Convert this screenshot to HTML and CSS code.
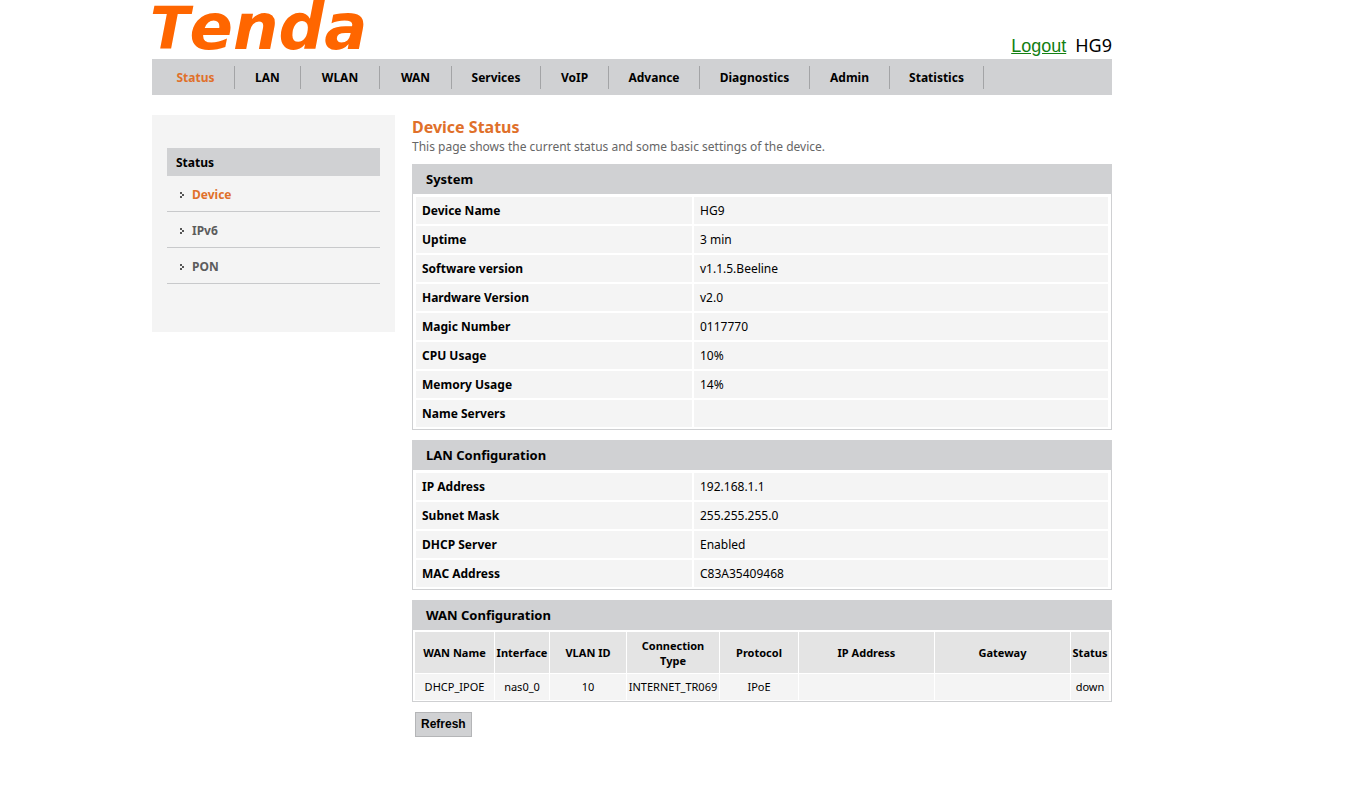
FILE: index.html
```html
<!DOCTYPE html>
<html lang="en">
<head>
<meta charset="utf-8">
<title>Tenda HG9 - Device Status</title>
<link rel="stylesheet" href="styles.css">
</head>
<body>
<div class="page">
  <header class="header">
    <svg class="logo" viewBox="0 0 232 56" role="img" aria-label="Tenda"><text class="logo-text" x="-2" y="49"><tspan class="logo-cap">T</tspan>enda</text></svg>
    <div class="account"><a class="logout" href="#">Logout</a><span class="model">HG9</span></div>
  </header>
  <nav class="nav">
    <a class="nav-item active" href="#">Status</a>
    <a class="nav-item" href="#">LAN</a>
    <a class="nav-item" href="#">WLAN</a>
    <a class="nav-item" href="#">WAN</a>
    <a class="nav-item" href="#">Services</a>
    <a class="nav-item" href="#">VoIP</a>
    <a class="nav-item" href="#">Advance</a>
    <a class="nav-item" href="#">Diagnostics</a>
    <a class="nav-item" href="#">Admin</a>
    <a class="nav-item" href="#">Statistics</a>
  </nav>
  <div class="body">
    <aside class="side">
      <h2 class="side-title">Status</h2>
      <a class="side-item active" href="#"><svg class="bullet" viewBox="0 0 5 6"><path d="M1 0h2v2H1zM3 2h2v2H3zM1 4h2v2H1z"/></svg>Device</a>
      <a class="side-item" href="#"><svg class="bullet" viewBox="0 0 5 6"><path d="M1 0h2v2H1zM3 2h2v2H3zM1 4h2v2H1z"/></svg>IPv6</a>
      <a class="side-item" href="#"><svg class="bullet" viewBox="0 0 5 6"><path d="M1 0h2v2H1zM3 2h2v2H3zM1 4h2v2H1z"/></svg>PON</a>
    </aside>
    <main class="content">
      <h1 class="title">Device Status</h1>
      <p class="intro">This page shows the current status and some basic settings of the device.</p>
      <section class="panel">
        <h2 class="panel-title">System</h2>
        <div class="panel-body">
          <table class="info">
            <tr><th>Device Name</th><td>HG9</td></tr>
            <tr><th>Uptime</th><td>3 min</td></tr>
            <tr><th>Software version</th><td>v1.1.5.Beeline</td></tr>
            <tr><th>Hardware Version</th><td>v2.0</td></tr>
            <tr><th>Magic Number</th><td>0117770</td></tr>
            <tr><th>CPU Usage</th><td>10%</td></tr>
            <tr><th>Memory Usage</th><td>14%</td></tr>
            <tr><th>Name Servers</th><td></td></tr>
          </table>
        </div>
      </section>
      <section class="panel">
        <h2 class="panel-title">LAN Configuration</h2>
        <div class="panel-body">
          <table class="info">
            <tr><th>IP Address</th><td>192.168.1.1</td></tr>
            <tr><th>Subnet Mask</th><td>255.255.255.0</td></tr>
            <tr><th>DHCP Server</th><td>Enabled</td></tr>
            <tr><th>MAC Address</th><td>C83A35409468</td></tr>
          </table>
        </div>
      </section>
      <section class="panel">
        <h2 class="panel-title">WAN Configuration</h2>
        <div class="panel-body">
          <table class="wan">
            <colgroup><col class="c-name"><col class="c-if"><col class="c-vlan"><col class="c-type"><col class="c-proto"><col><col><col class="c-status"></colgroup>
            <thead><tr><th>WAN Name</th><th>Interface</th><th>VLAN ID</th><th>Connection<br>Type</th><th>Protocol</th><th>IP Address</th><th>Gateway</th><th>Status</th></tr></thead>
            <tbody><tr><td>DHCP_IPOE</td><td>nas0_0</td><td>10</td><td>INTERNET_TR069</td><td>IPoE</td><td></td><td></td><td>down</td></tr></tbody>
          </table>
        </div>
      </section>
      <button class="refresh" type="button">Refresh</button>
    </main>
  </div>
</div>
</body>
</html>
```
FILE: styles.css
```css
* { box-sizing: border-box; }
body { margin: 0; background: #fff; color: #000; font: 12px/16px "Noto Sans", "Open Sans", sans-serif; }
a { text-decoration: none; color: inherit; }
h1, h2, p { margin: 0; }

.page { max-width: 1112px; padding-left: 152px; }

.header { display: flex; justify-content: space-between; align-items: flex-end; height: 59px; padding-bottom: 1px; }
.logo { width: 232px; height: 56px; align-self: flex-start; overflow: visible; }
.logo-text { font: italic bold 64px "DejaVu Sans", sans-serif; font-kerning: none; fill: #ff6600; }
.logo-cap { font-size: 58px; }
.account { display: flex; align-items: baseline; gap: 9px; line-height: 24px; }
.logout { font-family: "Liberation Sans", Arial, sans-serif; font-size: 18px; color: #138013; text-decoration: underline; }
.model { font-size: 18px; }

.nav { display: grid; grid-template-columns: 78px 66px 79px 72px 89px 68px 91px 110px 80px 94px; align-items: center; height: 36px; padding-left: 5px; background: #d0d1d3; }
.nav-item { height: 23px; line-height: 23px; border-right: 1px solid #a3a4a6; font-weight: bold; text-align: center; white-space: nowrap; }
.active { color: #e0702a; }

.body { display: flex; align-items: flex-start; gap: 17px; padding-top: 20px; }
.side { flex: 0 0 243px; padding: 33px 15px 48px; background: #f4f4f4; }
.side-title { height: 28px; padding-left: 9px; background: #d0d1d3; font-size: 12px; line-height: 29px; }
.side-item { display: flex; align-items: center; gap: 8px; height: 36px; padding: 2px 0 0 12px; border-bottom: 1px solid #c8c9cb; color: #5c5c5c; font-weight: bold; }
.side-item.active { color: #e0702a; }
.bullet { width: 5px; height: 6px; fill: #555; }

.content { flex: 1; min-width: 0; }
.title { color: #e0702a; font-size: 16px; line-height: 24px; }
.intro { color: #666; line-height: 16px; margin-bottom: 9px; }
.panel { margin-bottom: 10px; }
.panel-title { padding-left: 14px; background: #d0d1d3; font-size: 13px; line-height: 30px; }
.panel-body { padding: 1px 1px 0; border: 1px solid #cfd0d2; border-top: 0; }
table { width: 100%; }
.info { border-spacing: 2px; }
.info th, .info td { height: 27px; padding: 0 6px; background: #f4f4f4; text-align: left; }
.info th { width: 40%; }
.wan { table-layout: fixed; border-spacing: 1px; font-size: 11px; line-height: 15px; text-align: center; }
.wan th { height: 41px; padding: 0; background: #e4e4e4; }
.wan td { height: 26px; padding: 0 0 2px; background: #f4f4f4; white-space: nowrap; }
.c-name { width: 79px; }
.c-if { width: 54px; }
.c-vlan { width: 76px; }
.c-type { width: 92px; }
.c-proto { width: 78px; }
.c-status { width: 38px; }
.refresh { display: block; height: 25px; margin-left: 3px; padding: 0 5px 2px; border: 1px solid #b4b5b7; background: #d0d1d3; color: #000; font: bold 12px "Liberation Sans", Arial, sans-serif; }
```
